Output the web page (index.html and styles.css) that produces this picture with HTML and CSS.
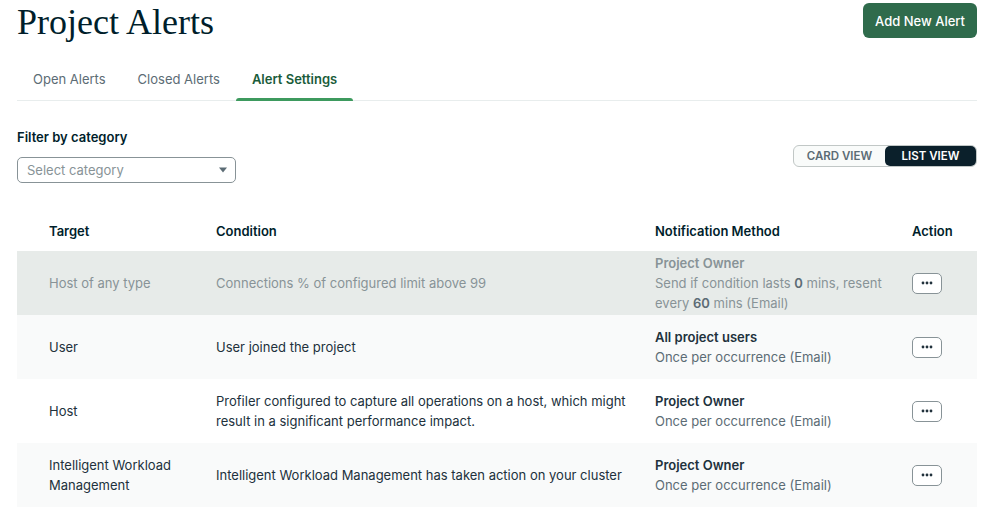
FILE: index.html
```html
<!DOCTYPE html>
<html lang="en">
<head>
    <meta charset="UTF-8">
    <meta name="viewport" content="width=device-width, initial-scale=1.0">
    <title>Project Alerts</title>
    <link rel="stylesheet" href="styles.css">
</head>
<body>
    <div class="page">
        <div class="top">
            <h1>Project Alerts</h1>
            <button class="btn-primary">Add New Alert</button>
        </div>

        <div class="tabs">
            <div class="tab">Open Alerts</div>
            <div class="tab">Closed Alerts</div>
            <div class="tab active">Alert Settings</div>
        </div>

        <div class="toolbar">
            <div class="filter">
                <label>Filter by category</label>
                <div class="select">
                    <span>Select category</span>
                    <svg width="10" height="6" viewBox="0 0 10 6"><path d="M1 0.5h8L5 5.5z" fill="#5c6c75"/></svg>
                </div>
            </div>
            <div class="toggle">
                <div class="toggle-item">CARD VIEW</div>
                <div class="toggle-item on">LIST VIEW</div>
            </div>
        </div>

        <div class="table">
            <div class="row head">
                <div>Target</div>
                <div>Condition</div>
                <div>Notification Method</div>
                <div>Action</div>
            </div>
            <div class="row muted">
                <div>Host of any type</div>
                <div>Connections % of configured limit above 99</div>
                <div>
                    <div class="who">Project Owner</div>
                    <div class="how">Send if condition lasts <b>0</b> mins, resent every <b>60</b> mins (Email)</div>
                </div>
                <div><button class="dots"><svg width="12" height="4" viewBox="0 0 12 4"><circle cx="2" cy="2" r="1.4"/><circle cx="6" cy="2" r="1.4"/><circle cx="10" cy="2" r="1.4"/></svg></button></div>
            </div>
            <div class="row tint">
                <div>User</div>
                <div>User joined the project</div>
                <div>
                    <div class="who">All project users</div>
                    <div class="how">Once per occurrence (Email)</div>
                </div>
                <div><button class="dots"><svg width="12" height="4" viewBox="0 0 12 4"><circle cx="2" cy="2" r="1.4"/><circle cx="6" cy="2" r="1.4"/><circle cx="10" cy="2" r="1.4"/></svg></button></div>
            </div>
            <div class="row">
                <div>Host</div>
                <div>Profiler configured to capture all operations on a host, which might result in a significant performance impact.</div>
                <div>
                    <div class="who">Project Owner</div>
                    <div class="how">Once per occurrence (Email)</div>
                </div>
                <div><button class="dots"><svg width="12" height="4" viewBox="0 0 12 4"><circle cx="2" cy="2" r="1.4"/><circle cx="6" cy="2" r="1.4"/><circle cx="10" cy="2" r="1.4"/></svg></button></div>
            </div>
            <div class="row tint">
                <div>Intelligent Workload Management</div>
                <div>Intelligent Workload Management has taken action on your cluster</div>
                <div>
                    <div class="who">Project Owner</div>
                    <div class="how">Once per occurrence (Email)</div>
                </div>
                <div><button class="dots"><svg width="12" height="4" viewBox="0 0 12 4"><circle cx="2" cy="2" r="1.4"/><circle cx="6" cy="2" r="1.4"/><circle cx="10" cy="2" r="1.4"/></svg></button></div>
            </div>
        </div>
    </div>
</body>
</html>
```

FILE: styles.css
```css
body { margin: 0; font-family: Inter, "Noto Sans", sans-serif; font-size: 13px; color: #21313c; background: #fff; }
.page { padding: 0 23px 0 17px; }

.top { display: flex; justify-content: space-between; align-items: flex-start; padding-top: 3px; }
h1 { margin: 0; font-family: "Liberation Serif", serif; font-weight: 400; font-size: 36px; line-height: 38px; color: #001e2b; }
.btn-primary { height: 35px; padding: 0 12px; border: none; border-radius: 6px; background: #2f6b4c; color: #fff; font: 500 13px Inter, sans-serif; }

.tabs { display: flex; margin-top: 22px; border-bottom: 1px solid #e8eded; }
.tab { padding: 8px 16px 13px; color: #5c6c75; position: relative; }
.tab.active { color: #1a5c3a; font-weight: 600; }
.tab.active::after { content: ""; position: absolute; left: 0; right: 0; bottom: -1px; height: 3px; border-radius: 3px 3px 0 0; background: #3d9a5e; }

.toolbar { display: flex; justify-content: space-between; align-items: center; margin-top: 28px; }
.filter label { display: block; font-weight: 600; color: #001e2b; margin-bottom: 12px; }
.select { width: 219px; height: 26px; box-sizing: border-box; border: 1px solid #889397; border-radius: 5px; display: flex; align-items: center; justify-content: space-between; padding: 0 7px 0 9px; color: #889397; }
.toggle { display: flex; border: 1px solid #c1c7c6; border-radius: 6px; background: #f9fbfa; margin-top: 0; }
.toggle-item { width: 91px; height: 20px; line-height: 20px; text-align: center; font-size: 11.5px; font-weight: 600; color: #5c6c75; }
.toggle-item.on { background: #0b202b; color: #fff; border-radius: 5px; }

.table { margin-top: 28px; }
.row { display: grid; grid-template-columns: 167px 439px 257px auto; padding-left: 32px; height: 64px; align-items: center; line-height: 20px; }
.row > div:nth-child(2) { padding-right: 12px; }
.row.head { height: 40px; font-weight: 600; color: #001e2b; }
.row.muted { background: #e7ebe9; color: #889397; }
.row.tint { background: #f9fafa; }
.who { font-weight: 600; }
.how { color: #5c6c75; }
.muted .how, .muted .who { color: #889397; }
.muted .how b { color: #5c6c75; font-weight: 600; }
.dots { width: 30px; height: 21px; padding: 0; border: 1px solid #889397; border-radius: 5px; background: #fff; color: #21313c; display: flex; align-items: center; justify-content: center; }
.dots svg { fill: #21313c; }
```
